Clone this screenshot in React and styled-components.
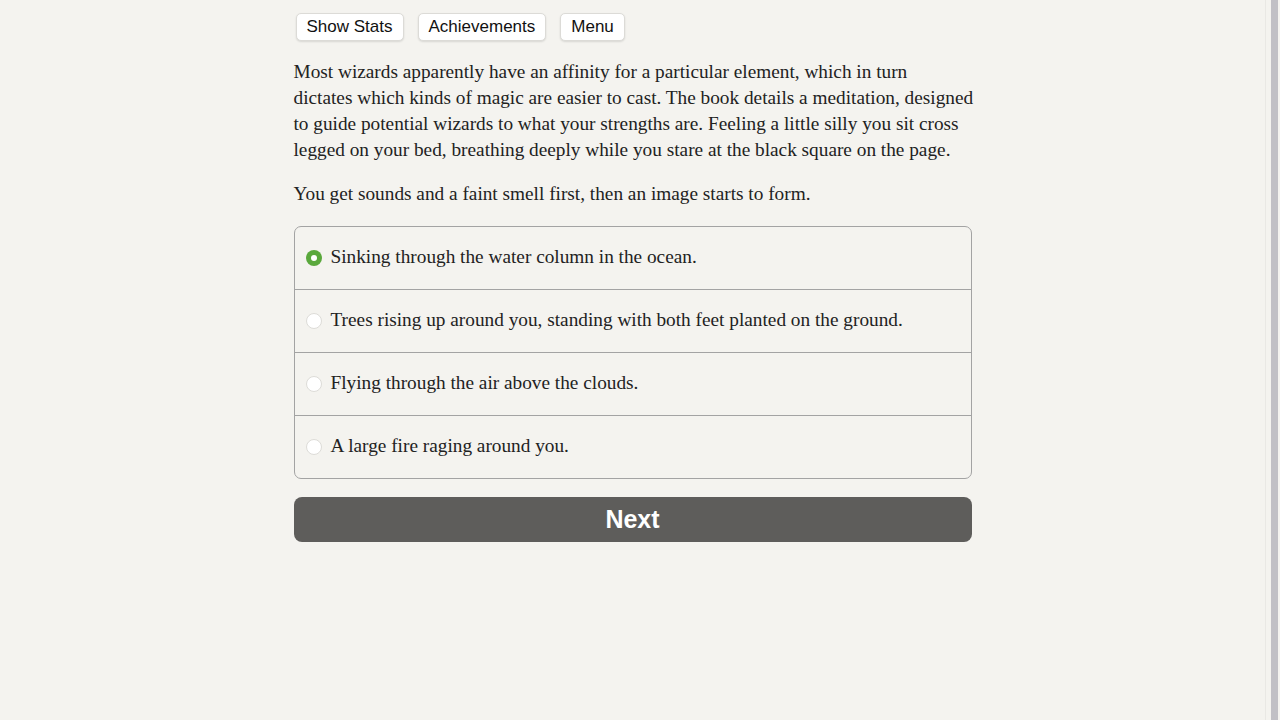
import styled, { createGlobalStyle } from 'styled-components';

const GlobalStyle = createGlobalStyle`
  html, body {
    margin: 0;
    padding: 0;
    background: #f4f3ef;
  }
  body {
    font-family: "Liberation Serif", "DejaVu Serif", serif;
    color: #222;
  }
`;

const Page = styled.div`
  display: flex;
  height: 720px;
  overflow: hidden;
`;

const Main = styled.main`
  flex: 1;
  display: flex;
  justify-content: center;
`;

/* fake scrollbar gutter like the browser shows */
const Gutter = styled.div`
  width: 14px;
  display: flex;
  justify-content: center;
  border-left: 1px solid #e9e8e4;
  background: #f4f3ef;
`;

const Thumb = styled.div`
  width: 7px;
  margin-left: 2px;
  background: #c1c0c5;
`;

const Container = styled.div`
  width: 678px;
  padding-top: 13px;
`;

const Toolbar = styled.div`
  display: flex;
  gap: 14px;
  padding-left: 2px;
  margin-bottom: 18px;
`;

const TopButton = styled.button`
  font-family: "Liberation Sans", Arial, sans-serif;
  font-size: 17px;
  color: #111;
  background: #fff;
  border: 1px solid #dcdbd7;
  border-radius: 5px;
  box-shadow: 0 1px 2px rgba(0, 0, 0, 0.12);
  height: 28px;
  padding: 0 10px;
  cursor: pointer;
`;

const Para = styled.p`
  margin: 0 0 18px;
  font-size: 19.3px;
  line-height: 26px;
  white-space: nowrap;
`;

const ChoiceBox = styled.div`
  margin-top: 19px;
  border: 1px solid #a3a3a3;
  border-radius: 7px;
  overflow: hidden;
`;

const Choice = styled.label`
  display: flex;
  align-items: center;
  gap: 9px;
  height: 62px;
  box-sizing: border-box;
  padding: 0 0 3px 11px;
  font-size: 19.3px;
  cursor: pointer;
  & + & {
    height: 63px;
    border-top: 1px solid #a3a3a3;
  }
`;

const Radio = styled.span`
  width: 16px;
  height: 16px;
  border-radius: 50%;
  box-sizing: border-box;
  flex-shrink: 0;
  background: ${(p) => (p.checked ? '#5aa83c' : '#fff')};
  border: ${(p) => (p.checked ? 'none' : '1px solid #dddcd8')};
  display: flex;
  align-items: center;
  justify-content: center;
  margin-top: 3px;

  &::after {
    content: '';
    width: 6px;
    height: 6px;
    border-radius: 50%;
    background: #fff;
    display: ${(p) => (p.checked ? 'block' : 'none')};
  }
`;

const NextButton = styled.button`
  display: block;
  width: 100%;
  height: 45px;
  margin-top: 18px;
  background: #5e5d5b;
  color: #fff;
  border: none;
  border-radius: 8px;
  font-family: "Liberation Sans", Arial, sans-serif;
  font-weight: bold;
  font-size: 25px;
  cursor: pointer;
`;

const choices = [
  'Sinking through the water column in the ocean.',
  'Trees rising up around you, standing with both feet planted on the ground.',
  'Flying through the air above the clouds.',
  'A large fire raging around you.',
];

export default function App() {
  return (
    <Page>
      <GlobalStyle />
      <Main>
        <Container>
          <Toolbar>
            <TopButton>Show Stats</TopButton>
            <TopButton>Achievements</TopButton>
            <TopButton>Menu</TopButton>
          </Toolbar>
          <Para>
            Most wizards apparently have an affinity for a particular element, which in turn
            <br />
            dictates which kinds of magic are easier to cast. The book details a meditation, designed
            <br />
            to guide potential wizards to what your strengths are. Feeling a little silly you sit cross
            <br />
            legged on your bed, breathing deeply while you stare at the black square on the page.
          </Para>
          <Para>You get sounds and a faint smell first, then an image starts to form.</Para>
          <ChoiceBox>
            {choices.map((c, i) => (
              <Choice key={i}>
                <Radio checked={i === 0} />
                {c}
              </Choice>
            ))}
          </ChoiceBox>
          <NextButton>Next</NextButton>
        </Container>
      </Main>
      <Gutter>
        <Thumb />
      </Gutter>
    </Page>
  );
}
